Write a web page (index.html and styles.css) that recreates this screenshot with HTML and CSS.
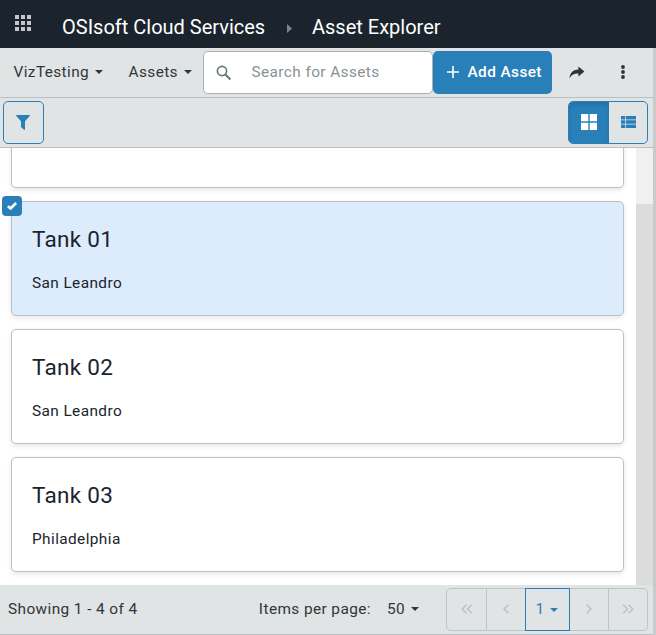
FILE: index.html
```html
<!DOCTYPE html>
<html lang="en">
<head>
<meta charset="utf-8">
<title>Asset Explorer</title>
<link rel="stylesheet" href="styles.css">
</head>
<body>
<div class="app">
  <header class="header">
    <svg class="waffle" width="16" height="16" viewBox="0 0 16 16" fill="currentColor"><path d="M0 0h4v4H0zM6 0h4v4H6zM12 0h4v4h-4zM0 6h4v4H0zM6 6h4v4H6zM12 6h4v4h-4zM0 12h4v4H0zM6 12h4v4H6zM12 12h4v4h-4z"/></svg>
    <span class="brand">OSIsoft Cloud Services</span>
    <svg class="crumb" width="5" height="9" viewBox="0 0 5 9" fill="currentColor"><path d="M0 0l5 4.500-5 4.500z"/></svg>
    <span class="title">Asset Explorer</span>
  </header>
  <div class="workspace">
    <div class="bar toolbar">
      <button class="menu menu-space">VizTesting<i class="caret"></i></button>
      <button class="menu menu-type">Assets<i class="caret"></i></button>
      <label class="search">
        <svg width="16" height="16" viewBox="0 0 16 16" fill="none" stroke="currentColor"><circle cx="6" cy="6" r="4.6" stroke-width="1.7"/><path d="M9.4 9.4l5 5" stroke-width="2.1"/></svg>
        <input type="text" placeholder="Search for Assets">
      </label>
      <button class="add"><svg width="12" height="12" viewBox="0 0 12 12" stroke="currentColor" stroke-width="1.6"><path d="M6 0v12M0 6h12"/></svg><span>Add Asset</span></button>
      <svg class="share" width="16" height="13" viewBox="0 0 16 13" fill="currentColor"><path d="M9.4 0.4L15.4 5.5L9.4 10.6V7.5C5 7.4 2.3 8.8 0.5 12.6C0.7 7.2 3.6 3.8 9.4 3.5z"/></svg>
      <svg class="more" width="4" height="14" viewBox="0 0 4 14" fill="currentColor"><circle cx="2" cy="2" r="1.9"/><circle cx="2" cy="7" r="1.9"/><circle cx="2" cy="12" r="1.9"/></svg>
    </div>
    <div class="bar filterbar">
      <button class="filter"><svg width="14" height="15" viewBox="0 0 14 15" fill="currentColor"><path d="M.5 0h13q.7.2.2 1L9 6.200V14.600q-.3.5-.8.100L5.300 12.400q-.3-.3-.3-.6V6.200L.3 1Q-.2.200.500 0z"/></svg></button>
      <div class="views">
        <span class="view view-on"><svg width="16" height="16" viewBox="0 0 16 16" fill="currentColor"><path d="M0 0h7.300v7.300H0zM8.700 0H16v7.300H8.700zM0 8.700h7.300V16H0zM8.700 8.700H16V16H8.700z"/></svg></span>
        <span class="view"><svg width="15" height="12" viewBox="0 0 15 12" fill="currentColor"><path d="M0 0h4v3.400H0zM4.700 0H15v3.400H4.700zM0 4.300h4v3.400H0zM4.700 4.300H15v3.400H4.700zM0 8.600h4V12H0zM4.700 8.600H15V12H4.700z"/></svg></span>
      </div>
    </div>
    <div class="content">
      <div class="cards">
        <article class="card"></article>
        <article class="card selected">
          <span class="check"><svg width="10" height="8" viewBox="0 0 10 8" fill="none" stroke="currentColor" stroke-width="2.600"><path d="M.9 4.100l2.600 2.400L9.100 1"/></svg></span>
          <h2>Tank 01</h2><p>San Leandro</p>
        </article>
        <article class="card"><h2>Tank 02</h2><p>San Leandro</p></article>
        <article class="card"><h2>Tank 03</h2><p>Philadelphia</p></article>
      </div>
      <div class="scroll"><div class="thumb"></div></div>
    </div>
    <footer class="footer">
      <span class="showing">Showing 1 - 4 of 4</span>
      <span class="per">Items per page:</span>
      <span class="count">50<i class="caret"></i></span>
      <nav class="pager">
        <span class="page first"><svg width="12" height="10" viewBox="0 0 12 10"><path d="M5.500 .7L1.200 5l4.300 4.300M10.800 .7L6.500 5l4.300 4.300"/></svg></span>
        <span class="page prev"><svg width="6" height="10" viewBox="0 0 6 10"><path d="M5.300 .7L1 5l4.300 4.300"/></svg></span>
        <span class="page current">1<i class="caret"></i></span>
        <span class="page next"><svg width="6" height="10" viewBox="0 0 6 10"><path d="M.7 .7L5 5 .7 9.300"/></svg></span>
        <span class="page last"><svg width="12" height="10" viewBox="0 0 12 10"><path d="M1.200 .7L5.500 5 1.200 9.300M6.500 .7L10.800 5 6.500 9.300"/></svg></span>
      </nav>
    </footer>
  </div>
</div>
</body>
</html>
```
FILE: styles.css
```css
* { box-sizing: border-box; }
body {
  margin: 0;
  font: 15.400px/20px Roboto, sans-serif;
  letter-spacing: 0.4px;
  color: #313638;
}
button { font: inherit; letter-spacing: inherit; color: inherit; background: none; border: 0; padding: 0; }
svg { display: block; flex: none; }
.app { width: 656px; height: 635px; display: flex; flex-direction: column; overflow: hidden; }
.header {
  height: 48px; flex: none; display: flex; align-items: center;
  padding: 6px 0 0 15px;
  background: #1b242c; color: #fff;
  font-size: 20px; line-height: 24px; letter-spacing: 0;
}
.waffle { color: #c3c7ca; margin: -8px 31px 0 0; }
.brand { width: 225px; white-space: nowrap; }
.crumb { color: #7d878b; margin: 2px 20px 0 0; }
.workspace { flex: 1; min-height: 0; display: flex; flex-direction: column; border-right: 3px solid #c9cacb; }
.bar { height: 50px; flex: none; display: flex; align-items: center; background: #e0e4e5; border-bottom: 1px solid #b9bfc2; }
.menu { display: flex; align-items: center; white-space: nowrap; height: 22px; padding-bottom: 2px; }
.menu-space { width: 115px; margin-left: 13.500px; }
.menu-type { width: 74.500px; }
.caret { border: 4.500px solid transparent; border-width: 4px 4.500px 0; border-top-color: currentColor; margin: 1px 0 0 5px; }
.menu .caret { margin-left: 6px; }
.search {
  width: 230px; height: 43px; display: flex; align-items: center;
  border: 1px solid #a8b2b4; border-radius: 5px; background: #fff;
  padding-left: 12px; color: #69777a;
}
.search input { font: inherit; letter-spacing: inherit; border: 0; padding: 0 0 2px; margin-left: 19.500px; width: 170px; outline: 0; background: none; }
.search input::placeholder { color: #899294; }
.add {
  width: 119px; height: 43px; border-radius: 5px; background: #2980b9; color: #fff;
  display: flex; align-items: center; padding-left: 14px; gap: 8.500px; font-weight: 500; white-space: nowrap;
}
.add svg { margin-top: -1px; }
.add span { padding-bottom: 2px; }
.share { margin-left: 17px; color: #303335; }
.more { margin: -1px 0 0 36px; color: #303335; }
.filterbar { padding: 0 5px 0 3px; justify-content: space-between; }
.filter {
  width: 41px; height: 43px; border: 1px solid #2980b9; border-radius: 5px; color: #2980b9;
  display: flex; align-items: center; justify-content: center; padding: 0 2px 1px 0;
}
.views { width: 80px; height: 43px; display: flex; border: 1px solid #2980b9; border-radius: 5px; overflow: hidden; }
.view { flex: 1; display: flex; align-items: center; justify-content: center; padding-bottom: 1px; color: #2980b9; }
.view-on { flex: 0 0 40px; background: #2980b9; color: #fff; box-shadow: inset 0 3px 5px rgba(0, 0, 0, 0.125); }
.content { flex: 1; min-height: 0; display: flex; overflow: hidden; background: #fff; }
.cards { flex: 1; display: flex; flex-direction: column; justify-content: flex-end; gap: 13px; padding: 0 12px 13px 11px; }
.card {
  position: relative; flex: none; height: 115px; padding: 23px 20px 0;
  border: 1px solid #bdc1c6; border-radius: 5px; background: #fff; color: #1b242c;
  box-shadow: 0 2px 5px rgba(0, 0, 0, 0.1);
}
.selected { background: #ddecfd; }
.card h2 { margin: 0; font-size: 22.500px; line-height: 28px; font-weight: 400; letter-spacing: 0.28px; }
.card p { margin: 20px 0 0; line-height: 20px; }
.check {
  position: absolute; left: -10px; top: -6px; width: 20px; height: 20px; border-radius: 4px;
  background: #2980b9; color: #fff; display: flex; align-items: center; justify-content: center;
}
.scroll { width: 17px; background: #f0f0f0; padding-top: 56px; }
.thumb { height: 100%; background: #dcdcdc; }
.footer { height: 50px; flex: none; display: flex; align-items: center; background: #e0e4e5; border-bottom: 1px solid #b9bfc2; padding: 0 5px 2px 8px; white-space: nowrap; }
.per { margin-left: auto; }
.count { display: flex; align-items: center; margin-left: 16px; }
.count .caret { margin-left: 6px; }
.pager { display: flex; width: 202px; height: 43px; margin-left: 27px; margin-top: 1px; color: #b9c2c3; }
.page { display: flex; align-items: center; justify-content: center; border: 1px solid #bdc4c5; border-left: 0; width: 39px; }
.page svg { fill: none; stroke: currentColor; stroke-width: 1.500; }
.first { width: 41px; border-left: 1px solid #bdc4c5; border-radius: 5px 0 0 5px; }
.prev { width: 38px; border-right: 0; }
.current { width: 45px; border: 1px solid #2980b9; color: #2980b9; padding-right: 2px; }
.last { border-radius: 0 5px 5px 0; }
```
